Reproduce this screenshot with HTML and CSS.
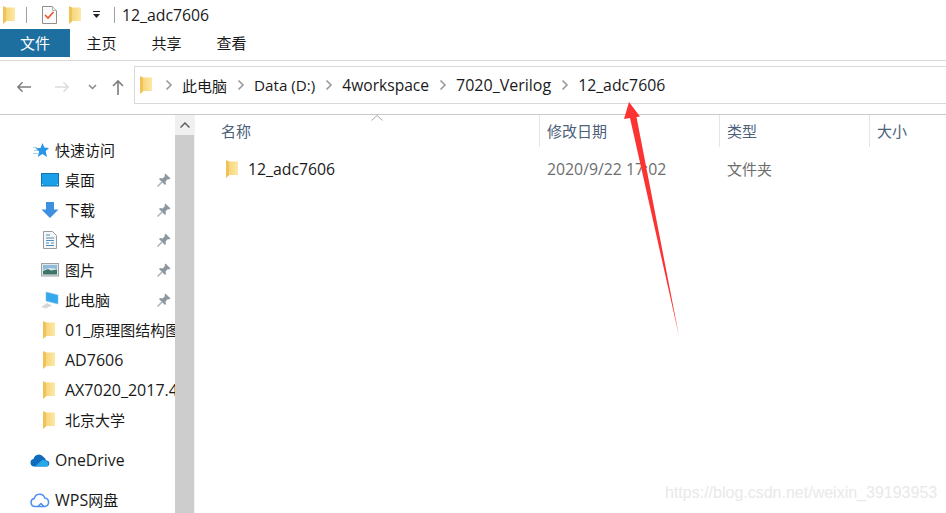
FILE: index.html
```html
<!DOCTYPE html>
<html lang="zh-CN">
<head>
<meta charset="utf-8">
<title>12_adc7606</title>
<link rel="stylesheet" href="styles.css">
</head>
<body>
<svg class="defs" width="0" height="0">
  <defs>
    <linearGradient id="fg" x1="0" y1="0" x2="1" y2="0"><stop offset="0" stop-color="#f6d477"/><stop offset="1" stop-color="#fde8a6"/></linearGradient>
    <symbol id="folder" viewBox="0 0 12 18">
      <path d="M2 1.500H12V15H2z" fill="url(#fg)"/>
      <path d="M0 0 3 1.500V15.500L0 18z" fill="#f0c257"/>
    </symbol>
    <symbol id="pin" viewBox="0 0 14 14">
      <path d="M8.500 0.500 13.500 5.500 12 6.500 11 6 8.500 8.500 9 11 8 12 2 6 3 5 5.500 5.500 8 3 7.500 2z" fill="#8c979f"/>
      <path d="M5 9 0.500 13.500" stroke="#aab3ba" stroke-width="1.500"/>
    </symbol>
    <symbol id="chev" viewBox="0 0 8 12">
      <path d="M1.500 1.500 6 6l-4.500 4.500" fill="none" stroke="#9a9a9a" stroke-width="1.600"/>
    </symbol>
  </defs>
</svg>

<div class="window">
  <div class="titlebar">
    <svg class="ic-folder"><use href="#folder"/></svg>
    <span class="vsep sep-a"></span>
    <svg class="ic-check" viewBox="0 0 15 18">
      <path d="M.5.5h10l4 4v13H.5z" fill="#fbfbfb" stroke="#8f8f8f"/>
      <path d="M10.500.5v4h4" fill="#eee" stroke="#b5b5b5"/>
      <path d="M3 9l3 3 5.500-6" fill="none" stroke="#e8562a" stroke-width="1.600"/>
    </svg>
    <svg class="ic-folder ic-folder-b"><use href="#folder"/></svg>
    <svg class="ic-drop" viewBox="0 0 7 7"><path d="M0 0h7v1H0zM0 3h7L3.500 7z" fill="#222"/></svg>
    <span class="vsep sep-b"></span>
    <span class="title lat-wide">12_adc7606</span>
  </div>

  <div class="tabs">
    <span class="tab tab-file">文件</span>
    <span class="tab">主页</span>
    <span class="tab">共享</span>
    <span class="tab">查看</span>
  </div>

  <div class="toolbar">
    <div class="navs">
      <svg class="nav-back" viewBox="0 0 16 12"><path d="M16 6H2M7 1 2 6l5 5" fill="none" stroke="#7e7e7e" stroke-width="1.600"/></svg>
      <svg class="nav-fwd" viewBox="0 0 16 12"><path d="M0 6h14M9 1l5 5-5 5" fill="none" stroke="#dcdcdc" stroke-width="1.600"/></svg>
      <svg class="nav-down" viewBox="0 0 9 6"><path d="M1 1l3.500 3.500L8 1" fill="none" stroke="#8a8a8a" stroke-width="1.500"/></svg>
      <svg class="nav-up" viewBox="0 0 12 16"><path d="M6 16V2M1 7l5-5 5 5" fill="none" stroke="#7e7e7e" stroke-width="1.600"/></svg>
    </div>
    <div class="address">
      <svg class="ic-folder ic-addr"><use href="#folder"/></svg>
      <svg class="chev chev-first"><use href="#chev"/></svg>
      <span class="crumb">此电脑</span>
      <svg class="chev"><use href="#chev"/></svg>
      <span class="crumb lat-data">Data (D:)</span>
      <svg class="chev"><use href="#chev"/></svg>
      <span class="crumb lat">4workspace</span>
      <svg class="chev"><use href="#chev"/></svg>
      <span class="crumb big">7020_Verilog</span>
      <svg class="chev"><use href="#chev"/></svg>
      <span class="crumb lat-wide">12_adc7606</span>
    </div>
  </div>

  <div class="body">
    <nav class="sidebar">
      <div class="row row-top">
        <svg class="ic-star" viewBox="0 0 16 15"><path d="M9.500 0l1.900 4.600L16 5l-3.300 3.200 1.300 5.800-4.600-3L4.800 14l1.300-5.600L2.500 5.300l5-.4z" fill="#2a96e6"/><path d="M0 4.500h4M1 7.500h4M0 10.500h5" stroke="#a9d2ef"/></svg>
        <span class="zh">快速访问</span>
      </div>
      <div class="row row-sub">
        <svg class="ic-item" viewBox="0 0 18 18"><rect x=".5" y="2.500" width="17" height="12.500" fill="#1c9fe9" stroke="#1673b4"/><path d="M1 13.500h16" stroke="#bfe6fb" stroke-dasharray="1 14"/></svg>
        <span class="name zh">桌面</span><svg class="pin"><use href="#pin"/></svg>
      </div>
      <div class="row row-sub">
        <svg class="ic-item" viewBox="0 0 18 18"><path d="M5 1h8v7.500h4.500L9 17 .5 8.500H5z" fill="#3d8fe0"/></svg>
        <span class="name zh">下载</span><svg class="pin"><use href="#pin"/></svg>
      </div>
      <div class="row row-sub">
        <svg class="ic-item" viewBox="0 0 18 18"><path d="M2.500.500h9l4 4v13h-13z" fill="#f7f7f7" stroke="#9a9a9a"/><path d="M5 4h4M5 7h8M5 9.500h8M5 12h3M10 12h3M5 14.500h8" stroke="#4a8fc0"/></svg>
        <span class="name zh">文档</span><svg class="pin"><use href="#pin"/></svg>
      </div>
      <div class="row row-sub">
        <svg class="ic-item" viewBox="0 0 18 18"><rect x=".5" y="2.500" width="17" height="12.500" fill="#dfe8ef" stroke="#a0a0a0"/><path d="M2 4h14v4L8 7 2 9z" fill="#8fbad8"/><path d="M2 10 7 8l3 1.500 6-1V13.500H2z" fill="#3f7566"/></svg>
        <span class="name zh">图片</span><svg class="pin"><use href="#pin"/></svg>
      </div>
      <div class="row row-sub">
        <svg class="ic-item" viewBox="0 0 18 18"><path d="M5 1l12 3v9L5 10z" fill="#35a7ec" stroke="#7fc4ee" stroke-width=".6"/><path d="M0 16 6 12l5 2.500-6 3z" fill="#d6d9dc"/></svg>
        <span class="name zh">此电脑</span><svg class="pin"><use href="#pin"/></svg>
      </div>
      <div class="row row-sub">
        <svg class="ic-folder ic-side"><use href="#folder"/></svg>
        <span class="name"><span class="big">01_</span>原理图结构图</span>
      </div>
      <div class="row row-sub">
        <svg class="ic-folder ic-side"><use href="#folder"/></svg>
        <span class="name big">AD7606</span>
      </div>
      <div class="row row-sub">
        <svg class="ic-folder ic-side"><use href="#folder"/></svg>
        <span class="name big">AX7020_2017.4</span>
      </div>
      <div class="row row-sub">
        <svg class="ic-folder ic-side"><use href="#folder"/></svg>
        <span class="name zh">北京大学</span>
      </div>
      <div class="row row-root">
        <svg class="ic-cloud" viewBox="0 0 20 14"><path d="M4 13.500a3.800 3.800 0 0 1-.5-7.500A5.500 5.500 0 0 1 13.500 4 4.500 4.500 0 0 1 16 7.500a3 3 0 0 1 .5 6z" fill="#0f6cbd"/><path d="M5 13.500 11 8a4 4 0 0 1 5 0 3 3 0 0 1 1 5.500z" fill="#28a8ea"/></svg>
        <span class="lat-wide">OneDrive</span>
      </div>
      <div class="row row-root">
        <svg class="ic-cloud" viewBox="0 0 20 16"><path d="M5 14.500a4 4 0 0 1-.8-7.900A5.500 5.500 0 0 1 14.800 6 4.300 4.300 0 0 1 15 14.500z" fill="#fff" stroke="#4e8ff0" stroke-width="1.500"/><path d="M8 14.500l3-3 3 3" fill="none" stroke="#4e8ff0" stroke-width="1.500"/></svg>
        <span><span class="big">WPS</span>网盘</span>
      </div>
    </nav>

    <div class="scrollbar">
      <div class="scroll-up">
        <svg viewBox="0 0 10 6"><path d="M.5 5.500 5 1l4.500 4.500" fill="none" stroke="#606060" stroke-width="1.500"/></svg>
      </div>
    </div>

    <main class="list">
      <div class="columns">
        <div class="col col-name">名称
          <svg class="sort" viewBox="0 0 12 6"><path d="M.5 5.500 6 .5l5.500 5" fill="none" stroke="#a8a8a8"/></svg>
        </div>
        <div class="col col-date">修改日期</div>
        <div class="col col-type">类型</div>
        <div class="col col-size">大小</div>
      </div>
      <div class="file">
        <div class="cell-name"><svg class="ic-folder ic-file"><use href="#folder"/></svg><span class="lat-wide">12_adc7606</span></div>
        <div class="cell-date lat-wide">2020/9/22 17:02</div>
        <div class="cell-type zh">文件夹</div>
      </div>
    </main>
  </div>

  <svg class="arrow" viewBox="0 0 946 513">
    <path d="M629 102 640 116.500 636.500 117 679 336 630 118 624 119z" fill="#fb3333"/>
  </svg>
  <div class="watermark">https://blog.csdn.net/weixin_39193953</div>
</div>
</body>
</html>
```
FILE: styles.css
```css
* { box-sizing: border-box; }
html, body { margin: 0; height: 100%; background: #fff; overflow: hidden; }
body { font-family: "Open Sans", "Noto Sans CJK SC", sans-serif; font-size: 15px; color: #1a1a1a; }
.defs { position: absolute; }
.window { position: relative; width: 946px; height: 513px; overflow: hidden; display: flex; flex-direction: column; }

.lat { font-size: 15.6px; }
.lat-data { font-size: 15.2px; }
.lat-wide { font-size: 15.8px; }
.big { font-size: 16px; }
.zh { padding-bottom: 2px; }

.titlebar { height: 29px; display: flex; align-items: center; padding-left: 3px; }
.ic-folder { width: 12px; height: 18px; flex: none; }
.vsep { width: 1px; height: 16px; background: #a0a0a0; }
.sep-a { margin-left: 11px; }
.ic-check { width: 15px; height: 18px; margin-left: 15px; }
.ic-folder-b { margin-left: 12px; }
.ic-drop { width: 7px; height: 7px; margin-left: 12px; }
.sep-b { margin-left: 14px; }
.title { margin-left: 7px; }

.tabs { height: 28px; display: flex; align-items: center; }
.tab { width: 65px; text-align: center; height: 28px; line-height: 27px; padding-top: 1px; }
.tab-file { width: 70px; margin-right: -1px; background: #1c6f9f; color: #fff; }

.toolbar { height: 55px; margin-top: 3px; border-top: 1px solid #dadada; border-bottom: 1px solid #c9c9c9; display: flex; align-items: center; }
.navs { width: 134px; height: 100%; display: flex; align-items: center; padding: 0 0 2px 16px; }
.nav-back, .nav-fwd { width: 15px; height: 12px; }
.nav-fwd { margin-left: 24px; }
.nav-down { width: 9px; height: 6px; margin-left: 18px; }
.nav-up { width: 12px; height: 16px; margin-left: 15px; }
.address { flex: 1; height: 38px; margin-bottom: 5px; border: 1px solid #d9d9d9; border-right: none; display: flex; align-items: center; padding-left: 5px; }
.chev { width: 8px; height: 12px; margin: 0 9px 0 10px; flex: none; }
.chev-first { margin-left: 13px; }
.crumb { white-space: nowrap; }

.body { flex: 1; display: flex; min-height: 0; }
.sidebar { width: 175px; flex: none; padding-top: 20px; overflow: hidden; }
.row { height: 30px; display: flex; align-items: center; white-space: nowrap; position: relative; }
.row-top { padding-left: 33px; }
.row-top span { margin-left: 6px; }
.ic-star { width: 16px; height: 15px; flex: none; }
.row-sub { padding-left: 41px; }
.ic-item { width: 18px; height: 18px; flex: none; }
.ic-side { margin-left: 2px; }
.name { margin-left: 6px; }
.ic-side + .name { margin-left: 10px; }
.pin { position: absolute; left: 157px; top: 8px; width: 14px; height: 14px; }
.row-root { padding-left: 30px; margin-top: 10px; }
.row-root > span { margin-left: 5px; }
.ic-cloud { width: 20px; height: 16px; flex: none; }

.scrollbar { width: 19px; flex: none; background: #cdcdcd; }
.scroll-up { height: 20px; background: #f0f0f0; display: flex; align-items: center; justify-content: center; }
.scroll-up svg { width: 10px; height: 6px; }

.list { flex: 1; min-width: 0; border-left: 1px solid #f2f2f2; }
.columns { height: 32px; display: flex; color: #4c607a; }
.col { line-height: 32px; padding-left: 7px; border-right: 1px solid #e5e5e5; position: relative; }
.col-name { width: 345px; padding-left: 26px; }
.col-date { width: 180px; }
.col-type { width: 150px; }
.col-size { border-right: none; }
.sort { position: absolute; left: 176px; top: 0; width: 12px; height: 6px; }
.file { display: flex; height: 30px; margin-top: 7px; align-items: center; color: #6d6d6d; }
.cell-name { width: 345px; padding-left: 31px; display: flex; align-items: center; color: #1a1a1a; }
.cell-name span { margin-left: 10px; }
.cell-date { width: 180px; padding-left: 7px; }
.cell-type { padding-left: 7px; }

.arrow { position: absolute; left: 0; top: 0; width: 946px; height: 513px; pointer-events: none; }
.watermark { position: absolute; left: 665px; top: 484px; font-family: "Liberation Sans", sans-serif; font-size: 16px; color: #e9e9e9; white-space: nowrap; }
```
